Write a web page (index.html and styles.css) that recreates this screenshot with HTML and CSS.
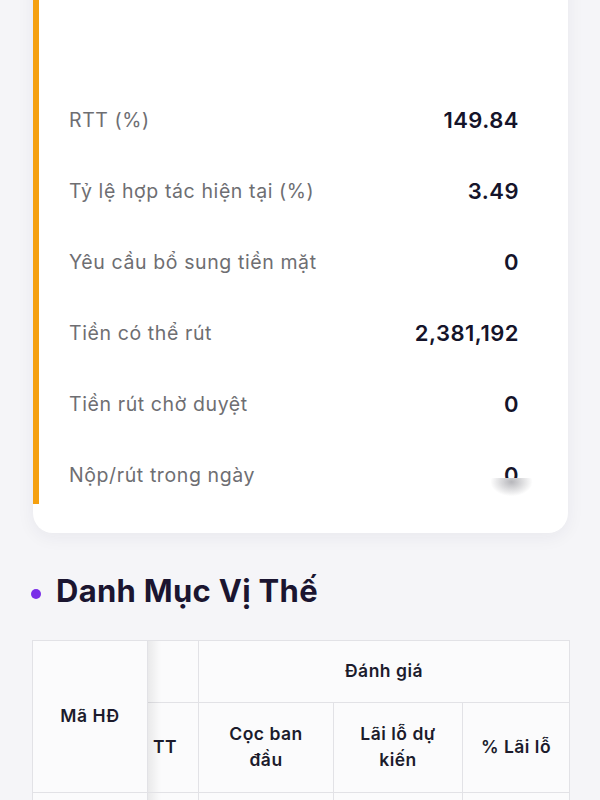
FILE: index.html
```html
<!doctype html>
<html lang="vi">
<head>
    <meta charset="UTF-8">
    <meta name="viewport" content="width=device-width, initial-scale=1.0">
    <title>Tài khoản - Danh mục vị thế</title>
    <link rel="stylesheet" href="styles.css">
</head>
<body>
    <div class="card">
        <ul class="card__list">
            <li class="card__row"><span class="card__label">RTT (%)</span><span class="card__value">149.84</span></li>
            <li class="card__row"><span class="card__label">Tỷ lệ hợp tác hiện tại (%)</span><span class="card__value">3.49</span></li>
            <li class="card__row"><span class="card__label">Yêu cầu bổ sung tiền mặt</span><span class="card__value">0</span></li>
            <li class="card__row"><span class="card__label">Tiền có thể rút</span><span class="card__value">2,381,192</span></li>
            <li class="card__row"><span class="card__label">Tiền rút chờ duyệt</span><span class="card__value">0</span></li>
            <li class="card__row"><span class="card__label">Nộp/rút trong ngày</span><span class="card__value card__value--cut">0</span></li>
        </ul>
    </div>

    <h2 class="section-title">Danh Mục Vị Thế</h2>

    <div class="table-wrap">
        <table class="positions">
            <colgroup>
                <col class="col-code">
                <col class="col-tt">
                <col class="col-deposit">
                <col class="col-pnl">
                <col class="col-pct">
            </colgroup>
            <thead>
                <tr class="positions__group">
                    <th rowspan="2" class="sticky">Mã HĐ</th>
                    <th></th>
                    <th colspan="3">Đánh giá</th>
                </tr>
                <tr class="positions__sub">
                    <th class="left">TT</th>
                    <th>Cọc ban đầu</th>
                    <th>Lãi lỗ dự kiến</th>
                    <th>% Lãi lỗ</th>
                </tr>
            </thead>
            <tbody>
                <tr>
                    <td class="sticky">&nbsp;</td>
                    <td></td>
                    <td></td>
                    <td></td>
                    <td></td>
                </tr>
            </tbody>
        </table>
    </div>
</body>
</html>
```

FILE: styles.css
```css
*, ::before, ::after {
    padding: 0;
    margin: 0;
    box-sizing: border-box;
    font-family: 'Inter', sans-serif;
}
body {
    background: #f5f5f8;
    overflow: hidden;
}
.card {
    margin: -40px 32px 0 33px;
    padding-bottom: 29px;
    background: #ffffff;
    border-radius: 20px;
    box-shadow: 0 4px 18px rgba(30, 30, 60, 0.06);
}
.card__list {
    list-style: none;
    padding: 124px 49px 0 30px;
    border-left: 6px solid #f5a00f;
    border-bottom-right-radius: 4px;
}
.card__row {
    display: flex;
    justify-content: space-between;
    align-items: center;
    padding: 23.5px 0;
    line-height: 24px;
}
.card__row:last-child {
    padding-bottom: 17px;
}
.card__label {
    font-size: 19.5px;
    letter-spacing: 0.6px;
    color: #6e6e72;
}
.card__value {
    font-size: 22px;
    font-weight: 600;
    letter-spacing: 0.5px;
    color: #15142a;
}
.card__value--cut {
    position: relative;
}
.card__value--cut::after {
    content: '';
    position: absolute;
    left: -16px;
    right: -16px;
    top: 15px;
    height: 26px;
    background: radial-gradient(ellipse 45% 55% at 50% 15%, rgba(170, 170, 175, 0.85), rgba(255, 255, 255, 0) 100%), #ffffff;
}
.section-title {
    display: flex;
    align-items: center;
    margin: 40px 0 0 31px;
    font-size: 31px;
    font-weight: 700;
    letter-spacing: 0.3px;
    color: #1b1530;
    line-height: 36px;
}
.section-title::before {
    content: '';
    width: 10px;
    height: 10px;
    border-radius: 50%;
    background: #7a2ee8;
    margin-right: 15px;
    margin-top: 7px;
}
.table-wrap {
    margin: 31px 31px 0 32px;
}
.positions {
    width: 537px;
    border-collapse: separate;
    border-spacing: 0;
    table-layout: fixed;
    background: #fbfbfc;
    border-top: 1px solid #e2e2e6;
    border-left: 1px solid #e2e2e6;
}
.col-code { width: 115px; }
.col-tt { width: 51px; }
.col-deposit { width: 135px; }
.col-pnl { width: 129px; }
.col-pct { width: 107px; }
.positions th,
.positions td {
    border-right: 1px solid #e2e2e6;
    border-bottom: 1px solid #e2e2e6;
    font-size: 17.5px;
    font-weight: 600;
    letter-spacing: 0.5px;
    color: #1c1b2c;
    line-height: 26px;
    text-align: center;
    padding: 0 16px;
}
.positions__group th {
    height: 62px;
}
.positions__sub th {
    height: 90px;
}
.positions th.left {
    text-align: left;
    padding-left: 5px;
}
.positions td {
    height: 40px;
}
.sticky {
    position: sticky;
    left: 0;
    background: #fbfbfc;
}
.sticky::after {
    content: '';
    position: absolute;
    top: 0;
    bottom: 0;
    right: -14px;
    width: 13px;
    background: linear-gradient(to right, rgba(0, 0, 0, 0.07), rgba(0, 0, 0, 0));
}
```
